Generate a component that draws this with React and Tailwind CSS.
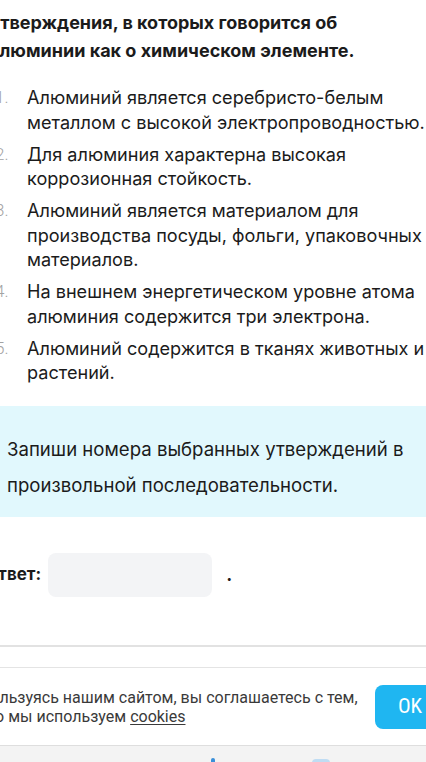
import React from 'react';

const items = [
  ['Алюминий является серебристо-белым', 'металлом с высокой электропроводностью.'],
  ['Для алюминия характерна высокая', 'коррозионная стойкость.'],
  ['Алюминий является материалом для', 'производства посуды, фольги, упаковочных', 'материалов.'],
  ['На внешнем энергетическом уровне атома', 'алюминия содержится три электрона.'],
  ['Алюминий содержится в тканях животных и', 'растений.'],
];

export default function App() {
  return (
    <div className="w-[426px] h-[762px] overflow-hidden bg-white text-[#1b1b1b] relative" style={{ fontFamily: 'Inter, "Noto Sans", sans-serif' }}>
      <div className="ml-[-11px] w-[480px]">
        {/* Question heading */}
        <h2 className="pt-[9px] text-[18px] font-bold leading-[28px] whitespace-nowrap">
          утверждения, в которых говорится об<br />алюминии как о химическом элементе.
        </h2>

        {/* Statements */}
        <ol className="mt-[20px] flex flex-col gap-[7.5px] whitespace-nowrap">
          {items.map((lines, i) => (
            <li key={i} className="flex">
              <span className="w-[38px] shrink-0 pl-[6px] text-[17px] leading-[24.5px] text-[#a3a3a3] font-light" style={{ fontFamily: 'Roboto, sans-serif' }}>{i + 1}.</span>
              <span className="text-[18.1px] leading-[24.5px]">
                {lines.map((l, j) => (
                  <React.Fragment key={j}>{l}{j < lines.length - 1 && <br />}</React.Fragment>
                ))}
              </span>
            </li>
          ))}
        </ol>

        {/* Hint box */}
        <div className="mt-[21px] h-[111px] bg-[#e1f8fd] pl-[18px] pt-[25px] text-[18.6px] leading-[36px] whitespace-nowrap">
          Запиши номера выбранных утверждений в<br />произвольной последовательности.
        </div>

        {/* Answer */}
        <div className="mt-[36px] flex items-center ml-[-4px]">
          <span className="text-[17px] font-bold">Ответ:</span>
          <div className="ml-[7px] w-[164px] h-[44px] rounded-[8px] bg-[#f3f4f6]" />
          <span className="ml-[14px] text-[18px] font-bold">.</span>
        </div>
      </div>

      {/* Bottom area */}
      <div className="absolute left-0 right-0 top-[645px]">
        <div className="border-t-2 border-[#e2e2e2] h-[22px] bg-white" />
        <div className="border-t border-[#e4e4e4] h-[78px] bg-white flex items-center">
          <p className="ml-[-21px] flex-1 text-[16px] leading-[19px] text-[#3a3a3a] whitespace-nowrap" style={{ fontFamily: 'Roboto, sans-serif' }}>
            Пользуясь нашим сайтом, вы соглашаетесь с тем,<br />что мы используем <span className="underline underline-offset-2">cookies</span>
          </p>
          <button className="mr-[-19px] w-[70px] h-[44px] rounded-[8px] bg-[#1fb6f1] text-white text-[21px] text-center" style={{ fontFamily: '"Liberation Sans Narrow", "Roboto Condensed", Roboto, sans-serif' }}>
            OK
          </button>
        </div>
        <div className="border-t border-[#dedede] h-[20px] bg-[#f3f3f3] relative">
          <div className="absolute left-[211px] top-[12px] w-[4px] h-[6px] rounded-t-full bg-[#3a8fd9]" />
          <div className="absolute left-[312px] top-[13px] w-[18px] h-[6px] rounded-t-[4px] bg-[#bfdcf3]" />
        </div>
      </div>
    </div>
  );
}
